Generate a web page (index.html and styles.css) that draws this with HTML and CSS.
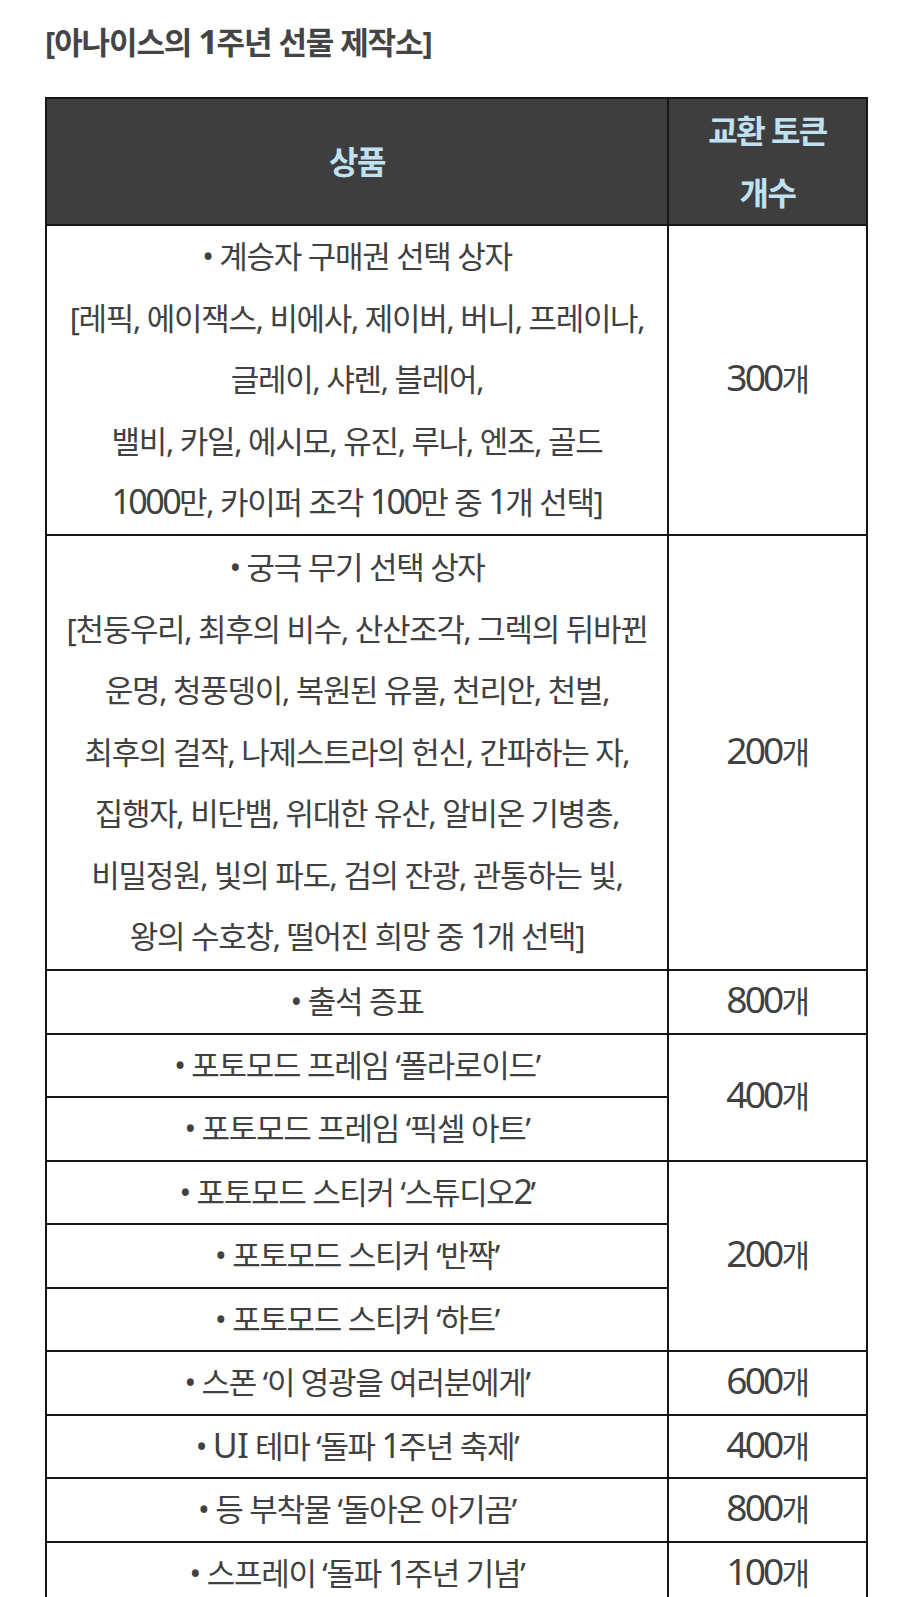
FILE: index.html
```html
<!DOCTYPE html>
<html lang="ko">
<head>
<meta charset="utf-8">
<title>아나이스의 1주년 선물 제작소</title>
<link rel="stylesheet" href="styles.css">
</head>
<body>
<main class="page">
  <h1 class="title">[아나이스의 <span class="num">1</span>주년 선물 제작소]</h1>
  <table class="shop">
    <colgroup>
      <col class="col-item">
      <col class="col-count">
    </colgroup>
    <thead>
      <tr>
        <th>상품</th>
        <th>교환 토큰<br>개수</th>
      </tr>
    </thead>
    <tbody>
      <tr>
        <td>• 계승자 구매권 선택 상자<br>[레픽, 에이잭스, 비에사, 제이버, 버니, 프레이나,<br>글레이, 샤렌, 블레어,<br>밸비, 카일, 에시모, 유진, 루나, 엔조, 골드<br><span class="num">1000</span>만, 카이퍼 조각 <span class="num">100</span>만 중 <span class="num">1</span>개 선택]</td>
        <td class="count"><span class="num">300</span>개</td>
      </tr>
      <tr class="tall">
        <td>• 궁극 무기 선택 상자<br>[천둥우리, 최후의 비수, 산산조각, 그렉의 뒤바뀐<br>운명, 청풍뎅이, 복원된 유물, 천리안, 천벌,<br>최후의 걸작, 나제스트라의 헌신, 간파하는 자,<br>집행자, 비단뱀, 위대한 유산, 알비온 기병총,<br>비밀정원, 빛의 파도, 검의 잔광, 관통하는 빛,<br>왕의 수호창, 떨어진 희망 중 <span class="num">1</span>개 선택]</td>
        <td class="count"><span class="num">200</span>개</td>
      </tr>
      <tr>
        <td>• 출석 증표</td>
        <td class="count"><span class="num">800</span>개</td>
      </tr>
      <tr>
        <td>• 포토모드 프레임 ‘폴라로이드’</td>
        <td class="count" rowspan="2"><span class="num">400</span>개</td>
      </tr>
      <tr>
        <td>• 포토모드 프레임 ‘픽셀 아트’</td>
      </tr>
      <tr>
        <td>• 포토모드 스티커 ‘스튜디오<span class="num">2</span>’</td>
        <td class="count" rowspan="3"><span class="num">200</span>개</td>
      </tr>
      <tr>
        <td>• 포토모드 스티커 ‘반짝’</td>
      </tr>
      <tr>
        <td>• 포토모드 스티커 ‘하트’</td>
      </tr>
      <tr>
        <td>• 스폰 ‘이 영광을 여러분에게’</td>
        <td class="count"><span class="num">600</span>개</td>
      </tr>
      <tr>
        <td>• <span class="lat">UI</span> 테마 ‘돌파 <span class="num">1</span>주년 축제’</td>
        <td class="count"><span class="num">400</span>개</td>
      </tr>
      <tr>
        <td>• 등 부착물 ‘돌아온 아기곰’</td>
        <td class="count"><span class="num">800</span>개</td>
      </tr>
      <tr class="last">
        <td>• 스프레이 ‘돌파 <span class="num">1</span>주년 기념’</td>
        <td class="count"><span class="num">100</span>개</td>
      </tr>
    </tbody>
  </table>
</main>
</body>
</html>
```

FILE: styles.css
```css
html {
  scrollbar-width: none;
}

html::-webkit-scrollbar {
  display: none;
}

html, body {
  margin: 0;
  padding: 0;
  background: #ffffff;
}

body {
  font-family: "Noto Sans", "Noto Sans CJK KR", sans-serif;
  color: #414141;
}

.page {
  width: 821px;
  padding: 22px 0 0 45px;
}

.title {
  margin: 0 0 35px 0;
  font-size: 31px;
  line-height: 40px;
  font-weight: 700;
  letter-spacing: -1.1px;
  color: #454545;
  white-space: nowrap;
}

.title .num {
  font-size: 1.12em;
  line-height: 1;
  letter-spacing: -1.5px;
}

.shop {
  width: 821px;
  border-collapse: collapse;
  table-layout: fixed;
}

.col-item {
  width: 622px;
}

.col-count {
  width: 199px;
}

.shop th,
.shop td {
  border: 2px solid #161616;
  padding: 0;
  text-align: center;
  vertical-align: middle;
  line-height: 61.5px;
  white-space: nowrap;
}

.shop th {
  background: #3e3e3e;
  color: #c0e1f2;
  font-size: 32px;
  font-weight: 700;
  letter-spacing: -1.5px;
  padding: 1px 0;
}

.shop td {
  font-size: 31px;
  font-weight: 400;
  letter-spacing: -1.3px;
  color: #414141;
}

.shop td .num {
  font-size: 1.1em;
  line-height: 1;
  letter-spacing: -2.6px;
}

.shop td .lat {
  font-size: 1.1em;
  line-height: 1;
  letter-spacing: -0.5px;
}

.shop td.count .num {
  font-size: 1.2em;
  letter-spacing: -2.8px;
}

.shop tr.tall td {
  padding: 1.5px 0;
}

.shop tr.last td {
  border-bottom: none;
  padding-bottom: 6px;
}
```
